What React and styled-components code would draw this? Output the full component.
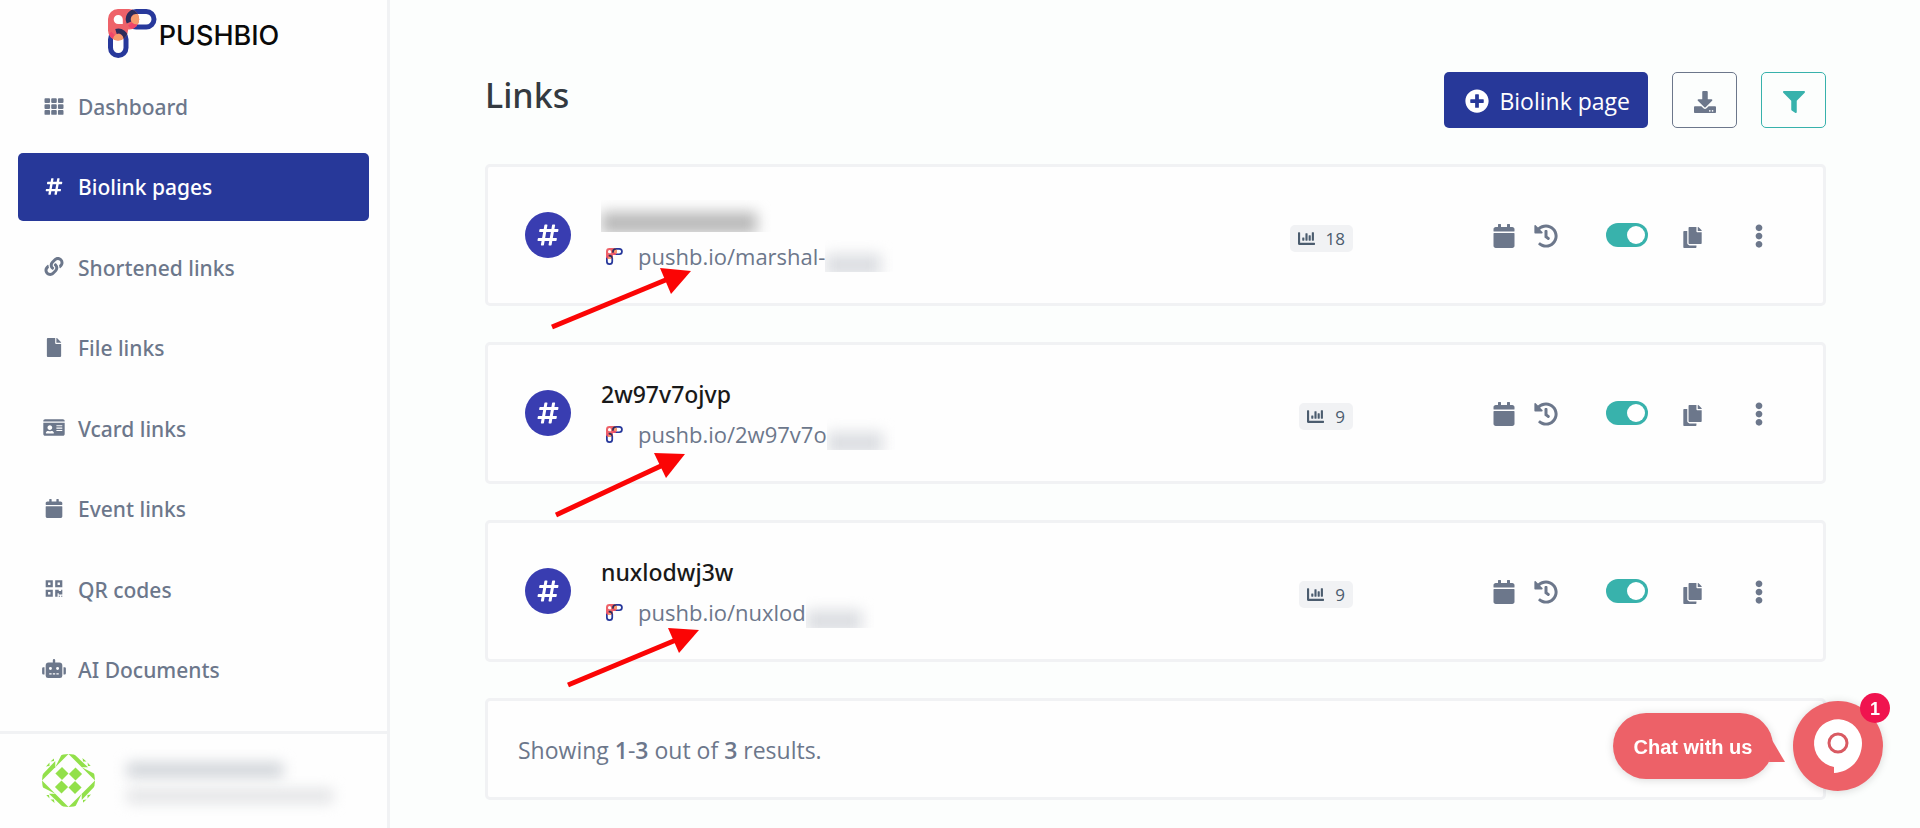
import React, { useState } from "react";
import styled, { createGlobalStyle } from "styled-components";
import {
    FaCalendar,
    FaChartBar,
    FaCopy,
    FaDownload,
    FaEllipsisV,
    FaFile,
    FaFilter,
    FaHashtag,
    FaHistory,
    FaIdCard,
    FaLink,
    FaPlusCircle,
    FaQrcode,
    FaRobot,
    FaTh,
} from "react-icons/fa";

const GlobalStyle = createGlobalStyle`
    * {
        box-sizing: border-box;
    }

    body {
        margin: 0;
        background: #fcfefd;
        color: #6c778b;
        font-family: "Open Sans", "Noto Sans", sans-serif;
        font-size: 22px;
        line-height: 32px;
    }

    button {
        font: inherit;
        cursor: pointer;
    }

    a {
        color: inherit;
        text-decoration: none;
    }
`;

const Layout = styled.div`
    display: flex;
    min-height: 100vh;
`;

const Sidebar = styled.aside`
    display: flex;
    flex-direction: column;
    flex: none;
    width: 390px;
    min-height: 100vh;
    background: #fefefe;
    border-right: 3px solid #f1f2f4;
`;

const Brand = styled.a`
    display: flex;
    justify-content: center;
    gap: 2px;
    height: 73px;
    padding-top: 9px;
    color: #0a0a0a;
    font-family: Inter, sans-serif;
    font-size: 27px;
    font-weight: 500;
    line-height: 54px;
`;

const Nav = styled.nav`
    display: flex;
    flex: 1;
    flex-direction: column;
    justify-content: space-between;
    padding: 0 18px 27px;
`;

const NavItem = styled.a`
    display: flex;
    align-items: center;
    gap: 12px;
    height: 68px;
    padding: 0 24px;
    border-radius: 5px;
    font-family: "Noto Sans", sans-serif;
    font-size: 21px;
    font-weight: 500;
    background: ${(props) => (props.$active ? "#273899" : "transparent")};
    && {
        color: ${(props) => (props.$active ? "#fff" : "#6c778b")};
    }

    svg {
        flex: none;
        width: 24px;
        height: 19px;
        margin-bottom: 2px;
    }
`;

const User = styled.div`
    display: flex;
    align-items: center;
    gap: 28px;
    height: 97px;
    padding: 0 42px 2px;
    border-top: 3px solid #f1f2f4;
`;

const UserText = styled.div`
    display: flex;
    flex-direction: column;
    gap: 12px;
    padding: 6px 0 0 4px;
`;

const Smudge = styled.span`
    display: block;
    width: ${(props) => props.$width}px;
    height: ${(props) => props.$height}px;
    background: ${(props) => props.$color};
    filter: blur(7px);
`;

const Main = styled.main`
    flex: 1;
    min-width: 0;
    padding: 72px 94px 28px 95px;
`;

const Header = styled.header`
    display: flex;
    align-items: flex-start;
    justify-content: space-between;
    margin-bottom: 36px;
`;

const Title = styled.h1`
    margin: 0;
    color: #343a40;
    font-family: "Noto Sans", sans-serif;
    font-size: 34px;
    font-weight: 500;
    line-height: 46px;
`;

const Actions = styled.div`
    display: flex;
    gap: 24px;
`;

const PrimaryButton = styled.button`
    display: flex;
    align-items: center;
    gap: 10px;
    height: 56px;
    padding: 2px 18px 0 21px;
    border: 0;
    border-radius: 5px;
    background: #273899;
    color: #fff;
    font-size: 23px;
`;

const OutlineButton = styled.button`
    display: flex;
    align-items: center;
    justify-content: center;
    width: 65px;
    height: 56px;
    padding: 4px 0 0;
    border: 1px solid currentColor;
    border-radius: 5px;
    background: transparent;
    color: ${(props) => props.$color};
`;

const List = styled.div`
    display: flex;
    flex-direction: column;
    gap: 36px;
`;

const Card = styled.section`
    position: relative;
    display: flex;
    align-items: center;
    min-height: ${(props) => (props.$short ? 102 : 142)}px;
    padding: 0 44px 0 ${(props) => (props.$short ? 30 : 37)}px;
    border: 3px solid #f1f2f4;
    border-radius: 5px;
    background: #fefefe;
`;

const TypeIcon = styled.span`
    display: flex;
    align-items: center;
    justify-content: center;
    flex: none;
    width: 46px;
    height: 46px;
    margin-right: 30px;
    border-radius: 50%;
    background: #393db1;
    color: #fff;
    font-size: 24px;
`;

const LinkInfo = styled.div`
    display: flex;
    flex: 1;
    flex-direction: column;
    gap: 8px;
    min-width: 0;
    padding-top: 2px;
`;

const LinkName = styled.a`
    height: 32px;
    font-family: "Noto Sans", sans-serif;
    font-size: 23px;
    font-weight: 500;
    && {
        color: #191919;
    }
`;

const NameSmudge = styled.span`
    display: block;
    width: 176px;
    height: 32px;
    padding-top: 12px;
    overflow: hidden;
`;

const LinkUrl = styled.div`
    display: flex;
    align-items: center;
    height: 32px;
    padding-left: 5px;

    > svg {
        margin-right: 15px;
    }
`;

const UrlText = styled.a`
    white-space: nowrap;
`;

const UrlSmudge = styled.span`
    width: 68px;
    height: 32px;
    padding-top: 14px;
    overflow: hidden;
`;

const Views = styled.a`
    display: flex;
    align-items: center;
    gap: 11px;
    height: 27px;
    margin: 6px 139px 0 0;
    padding: 0 8px;
    border-radius: 5px;
    background: #f1f2f4;
    font-size: 17px;
    line-height: 27px;
    && {
        color: #4b5c6e;
    }
`;

const Dates = styled.div`
    display: flex;
    gap: 18px;
    margin-right: 48px;
    padding-top: 2px;
    font-size: 24px;
`;

const Toggle = styled.input`
    flex: none;
    width: 42px;
    height: 24px;
    margin: 0 24px 0 0;
    padding: 3px;
    border-radius: 12px;
    appearance: none;
    background: ${(props) => (props.checked ? "#38b2ac" : "#c8ced6")};
    cursor: pointer;

    &::before {
        content: "";
        display: block;
        width: 18px;
        height: 18px;
        margin-left: ${(props) => (props.checked ? 18 : 0)}px;
        border-radius: 50%;
        background: #fff;
    }
`;

const IconButton = styled.button`
    display: flex;
    align-items: center;
    justify-content: center;
    width: 40px;
    height: 40px;
    margin-left: ${(props) => props.$space || 0}px;
    padding: ${(props) => props.$drop || 0}px 0 0;
    border: 0;
    background: transparent;
    color: #6c778b;
`;

const Arrow = styled.svg`
    position: absolute;
    top: 0;
    left: 0;
    overflow: visible;
    pointer-events: none;
`;

const Summary = styled.p`
    margin: 0;
    padding-top: 2px;
    font-size: 23px;

    b {
        font-weight: 600;
    }
`;

const Chat = styled.div`
    position: fixed;
    right: 37px;
    bottom: 37px;
    display: flex;
    align-items: center;
    gap: 20px;
    font-family: "Liberation Sans", Arial, sans-serif;
`;

const ChatBubble = styled.button`
    position: relative;
    width: 160px;
    height: 66px;
    padding: 2px 0 0;
    border: 0;
    border-radius: 33px;
    background: #ed6168;
    box-shadow: 0 1px 8px rgba(0, 0, 0, 0.15);
    color: #fff;
    font-size: 20px;
    font-weight: 700;
`;

const ChatTail = styled.svg`
    position: absolute;
    top: 27px;
    right: -12px;
`;

const ChatLauncher = styled.button`
    position: relative;
    width: 90px;
    height: 90px;
    padding: 0;
    border: 0;
    border-radius: 50%;
    background: #ed6168;
    box-shadow: 0 1px 8px rgba(0, 0, 0, 0.15);

    > svg {
        display: block;
    }
`;

const ChatCount = styled.span`
    position: absolute;
    top: -8px;
    right: -7px;
    width: 30px;
    height: 30px;
    border-radius: 50%;
    background: #f0144f;
    color: #fff;
    font-size: 18px;
    font-weight: 700;
    line-height: 32px;
`;

const navItems = [
    { label: "Dashboard", icon: FaTh },
    { label: "Biolink pages", icon: FaHashtag, active: true },
    { label: "Shortened links", icon: FaLink },
    { label: "File links", icon: FaFile },
    { label: "Vcard links", icon: FaIdCard },
    { label: "Event links", icon: FaCalendar },
    { label: "QR codes", icon: FaQrcode },
    { label: "AI Documents", icon: FaRobot },
];

const links = [
    {
        id: 1,
        url: "pushb.io/marshal-",
        views: 18,
        arrow: { shaft: "M64 160 L180 112", head: "172,101 203,104 183,127" },
    },
    {
        id: 2,
        name: "2w97v7ojvp",
        url: "pushb.io/2w97v7o",
        views: 9,
        arrow: { shaft: "M68 170 L175 120", head: "166,108 197,109 178,133" },
    },
    {
        id: 3,
        name: "nuxlodwj3w",
        url: "pushb.io/nuxlod",
        views: 9,
        arrow: { shaft: "M80 162 L188 117", head: "180,105 211,107 191,130" },
    },
];

const LogoMark = ({ size }) => (
    <svg width={size} height={size} viewBox="0 0 49 49" fill="none" aria-hidden="true">
        <defs>
            <clipPath id="logo-pink">
                <path d="M0 10A10 10 0 0 1 10 0H21A10 10 0 0 1 21 20.5H20V21.500A10 10 0 0 1 0 21.500Z" />
            </clipPath>
        </defs>
        <rect x="20.5" y="2.500" width="25.5" height="15.500" rx="7.700" stroke="#27389b" strokeWidth="5" />
        <rect x="2.500" y="22.500" width="15.500" height="24" rx="7.700" stroke="#27389b" strokeWidth="5" />
        <g clipPath="url(#logo-pink)">
            <path d="M0 0H32V32H0Z" fill="#ee6269" />
            <rect x="23" y="5" width="12" height="10.500" rx="5" fill="#f79b6c" />
            <rect x="5" y="25" width="10.500" height="12" rx="5" fill="#f79b6c" />
            <path d="M32 18H28.200A7.700 7.700 0 0 1 22 15" stroke="#f0466a" strokeWidth="5" />
            <path d="M2.500 32V30.200A7.700 7.700 0 0 1 5 24.500" stroke="#f0466a" strokeWidth="5" />
            <path d="M21 13.500A7.700 7.700 0 0 1 28.200 2.500H32" stroke="#2c2d5c" strokeWidth="5" />
            <path d="M8 22.500A7.700 7.700 0 0 1 18 30.200V33" stroke="#2c2d5c" strokeWidth="5" />
        </g>
        <path d="M10.200 6A4.500 4.500 0 0 1 14.800 10.500V15H10.200A4.500 4.500 0 0 1 10.200 6Z" fill="#fefefe" />
    </svg>
);

const Avatar = () => (
    <svg width="53" height="53" viewBox="0 0 53 53" fill="#92e04a" role="img" aria-label="Avatar">
        <defs>
            <clipPath id="avatar-circle">
                <circle cx="26.500" cy="26.500" r="26.500" />
            </clipPath>
        </defs>
        <g clipPath="url(#avatar-circle)">
            {[0, 90, 180, 270].map((angle) => (
                <g key={angle} transform={`rotate(${angle} 26.5 26.5)`}>
                    <path d="M19.900 0H26.500L13.250 13.250Z" />
                    <path d="M0 26.500V21L13.250 7V13.250Z" />
                    <path d="M12 3.500V7L8.500 7.500ZM7.500 8.500V12L3.500 12.500Z" />
                    <path d="M20 12.900L26.500 19.500L20 26.100L13.400 19.500Z" />
                </g>
            ))}
        </g>
    </svg>
);

const LinkRow = ({ link }) => {
    const [enabled, setEnabled] = useState(true);

    return (
        <Card>
            <TypeIcon>
                <FaHashtag />
            </TypeIcon>
            <LinkInfo>
                <LinkName href="#">
                    {link.name || (
                        <NameSmudge>
                            <Smudge $width={156} $height={22} $color="#b9b9b9" />
                        </NameSmudge>
                    )}
                </LinkName>
                <LinkUrl>
                    <LogoMark size={17} />
                    <UrlText href="#">{link.url}</UrlText>
                    <UrlSmudge>
                        <Smudge $width={56} $height={22} $color="#dcdee2" />
                    </UrlSmudge>
                </LinkUrl>
            </LinkInfo>
            <Views href="#">
                <FaChartBar />
                {link.views}
            </Views>
            <Dates>
                <FaCalendar />
                <FaHistory />
            </Dates>
            <Toggle
                type="checkbox"
                aria-label="Enabled"
                checked={enabled}
                onChange={(e) => setEnabled(e.target.checked)}
            />
            <IconButton aria-label="Copy" $drop={5}>
                <FaCopy size={21} />
            </IconButton>
            <IconButton aria-label="More" $space={27} $drop={2}>
                <FaEllipsisV size={24} />
            </IconButton>
            <Arrow width="1" height="1" aria-hidden="true">
                <path d={link.arrow.shaft} stroke="#fb0505" strokeWidth="5" />
                <polygon points={link.arrow.head} fill="#fb0505" />
            </Arrow>
        </Card>
    );
};

const App = () => {
    return (
        <Layout>
            <GlobalStyle />
            <Sidebar>
                <Brand href="#">
                    <LogoMark size={49} />
                    PUSHBIO
                </Brand>
                <Nav>
                    {navItems.map(({ label, icon: Icon, active }) => (
                        <NavItem key={label} href="#" $active={active}>
                            <Icon />
                            {label}
                        </NavItem>
                    ))}
                </Nav>
                <User>
                    <Avatar />
                    <UserText>
                        <Smudge $width={156} $height={14} $color="#cdd1d6" />
                        <Smudge $width={206} $height={14} $color="#e2e3e5" />
                    </UserText>
                </User>
            </Sidebar>
            <Main>
                <Header>
                    <Title>Links</Title>
                    <Actions>
                        <PrimaryButton>
                            <FaPlusCircle size={24} />
                            Biolink page
                        </PrimaryButton>
                        <OutlineButton aria-label="Export" $color="#6c778b">
                            <FaDownload size={22} />
                        </OutlineButton>
                        <OutlineButton aria-label="Filters" $color="#38b2ac">
                            <FaFilter size={22} />
                        </OutlineButton>
                    </Actions>
                </Header>
                <List>
                    {links.map((link) => (
                        <LinkRow key={link.id} link={link} />
                    ))}
                    <Card $short>
                        <Summary>
                            Showing <b>1</b>-<b>3</b> out of <b>3</b> results.
                        </Summary>
                    </Card>
                </List>
            </Main>
            <Chat>
                <ChatBubble>
                    Chat with us
                    <ChatTail width="16" height="22" viewBox="0 0 16 22" aria-hidden="true">
                        <path d="M3 0L16 22H0Z" fill="#ed6168" />
                    </ChatTail>
                </ChatBubble>
                <ChatLauncher aria-label="Open chat">
                    <svg width="90" height="90" viewBox="0 0 90 90" aria-hidden="true">
                        <path d="M41 66A24 24 0 1 1 69 42C69 58 58 71 41 72Z" fill="#fff" />
                        <circle cx="45" cy="42" r="9" fill="none" stroke="#d95a62" strokeWidth="3" />
                    </svg>
                    <ChatCount>1</ChatCount>
                </ChatLauncher>
            </Chat>
        </Layout>
    );
};

export default App;
